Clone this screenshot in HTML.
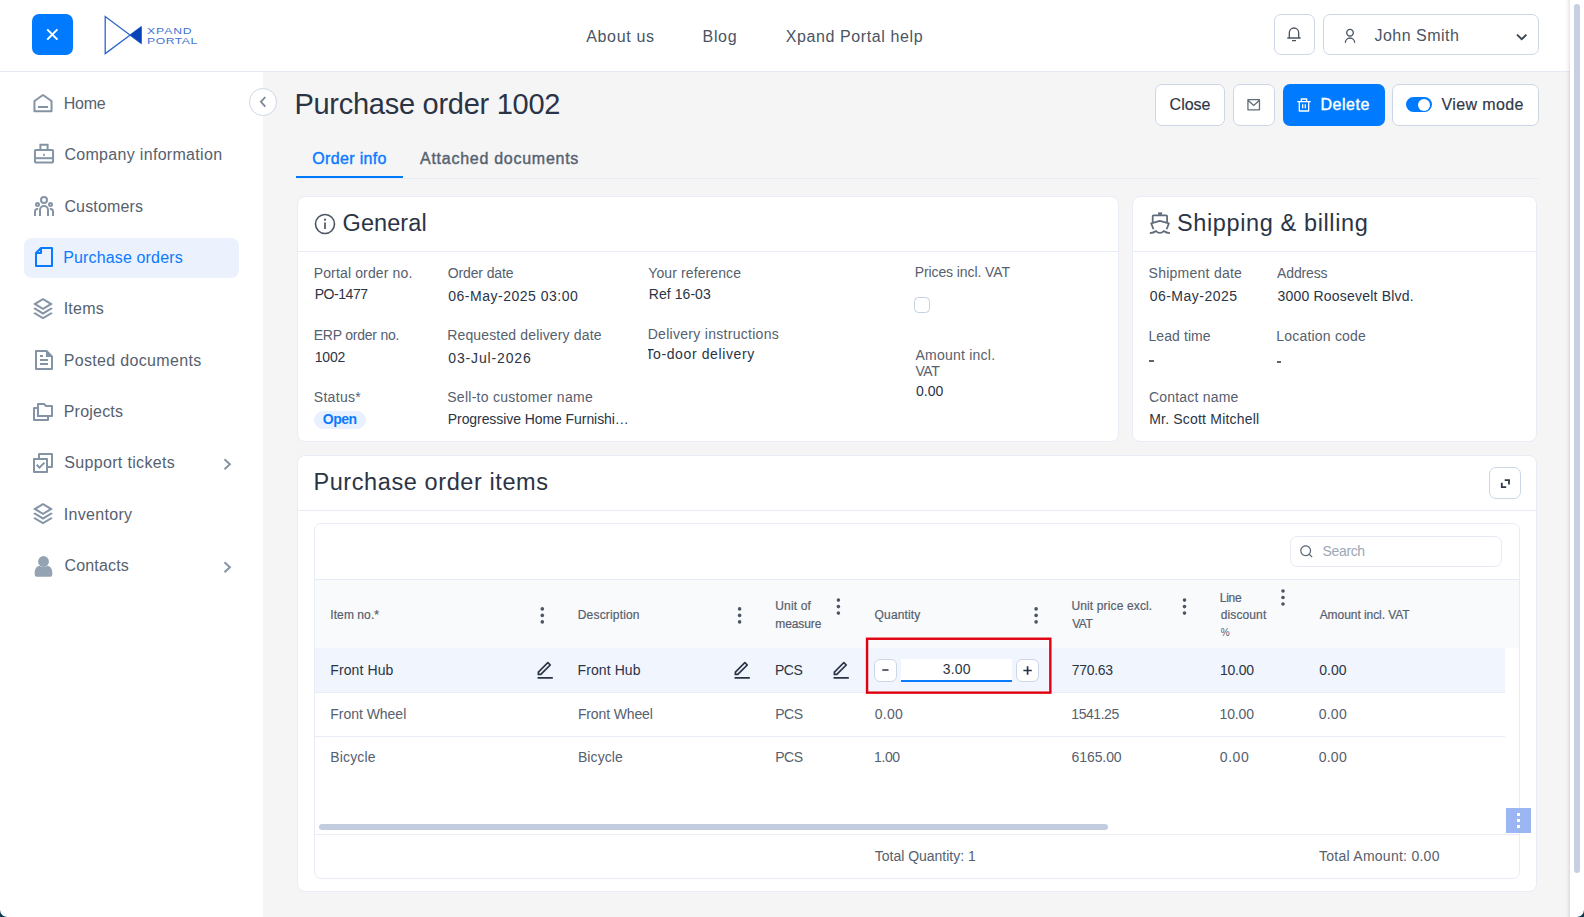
<!DOCTYPE html>
<html lang="en">
<head>
<meta charset="utf-8">
<title>Purchase order 1002</title>
<style>
*{box-sizing:border-box;margin:0;padding:0}
html,body{width:1584px;height:917px;overflow:hidden;background:#f5f5f5;font-family:"Liberation Sans",sans-serif;color:#2b3445}
.a{position:absolute}
.t{position:absolute;white-space:nowrap;line-height:1}
#header{position:absolute;left:0;top:0;width:1570px;height:72px;background:#fff;border-bottom:1px solid #e6ebf3}
#sidebar{position:absolute;left:0;top:72px;width:263px;height:845px;background:#fff}
#scroll{position:absolute;left:1565px;top:0;width:19px;height:917px;background:linear-gradient(to right,rgba(0,0,0,0) 0,rgba(0,0,0,.03) 2.5px,rgba(0,0,0,.1) 5px,#fff 5px,#fff 100%)}
#scroll .thumb{position:absolute;left:9px;top:4px;width:6px;height:869px;background:#c6d0e2;border-radius:3px}
.btn{position:absolute;border:1px solid #cdd6e6;border-radius:7px;background:#fff}
.card{position:absolute;background:#fff;border:1px solid #e8edf5;border-radius:8px}
.hl{position:absolute;height:1px;background:#e8edf5}
svg{position:absolute;overflow:visible}
.ic{fill:#8594a5}
.dk{fill:#4b5563}
</style>
</head>
<body>
<div id="header"></div>
<div id="sidebar"></div>

<!-- header: menu button + logo -->
<div class="a" style="left:31.5px;top:14px;width:41.5px;height:41px;border-radius:7px;background:#007bff"></div>
<svg width="1584" height="72" style="left:0;top:0">
  <path d="M47.2 29.4 L57.4 39.6 M57.4 29.4 L47.2 39.6" stroke="#fff" stroke-width="2" fill="none"/>
  <path d="M105.2 16.6 V53.6 L141 27 V43.3 Z" fill="none" stroke="#2d66cc" stroke-width="1.3"/>
  <path d="M130 35.1 L141.5 26.6 V43.6 Z" fill="#0542b8"/>
</svg>
<span class="t" style="left:147px;top:25.6px;font-size:9.5px;color:#3f74d4;letter-spacing:.71px;transform:scaleX(1.28);transform-origin:0 0">XPAND</span>
<span class="t" style="left:147px;top:36.2px;font-size:9.5px;color:#3f74d4;letter-spacing:.42px;transform:scaleX(1.28);transform-origin:0 0">PORTAL</span>

<!-- header right -->
<div class="btn" style="left:1274px;top:14px;width:41px;height:41px"></div>
<div class="btn" style="left:1323px;top:14px;width:215.5px;height:41px"></div>
<svg class="dk" viewBox="0 0 24 24" width="16" height="16" style="left:1286.4px;top:26.4px"><path d="M20 17h2v2H2v-2h2v-7a8 8 0 1 1 16 0v7zm-2 0v-7a6 6 0 1 0-12 0v7h12zm-9 4h6v2H9v-2z"/></svg>
<svg class="dk" viewBox="0 0 24 24" width="16" height="16" style="left:1341.9px;top:27.6px"><path d="M4 22a8 8 0 1 1 16 0h-2a6 6 0 1 0-12 0H4zm8-9c-3.315 0-6-2.685-6-6s2.685-6 6-6 6 2.685 6 6-2.685 6-6 6zm0-2c2.21 0 4-1.79 4-4s-1.79-4-4-4-4 1.79-4 4 1.79 4 4 4z"/></svg>
<svg width="20" height="20" style="left:1510px;top:28px"><path d="M7 6.6 L11.7 11.2 L16.4 6.6" fill="none" stroke="#3c4655" stroke-width="2"/></svg>

<!-- sidebar -->
<div class="a" style="left:24px;top:238px;width:215.3px;height:39.5px;border-radius:8px;background:#ebf2fe"></div>
<svg class="ic" viewBox="0 0 24 24" width="24" height="24" style="left:31.2px;top:91px"><path d="M3.45 10 L12 4 L20.55 10 V20.200 H3.45 Z" fill="none" stroke="#8594a5" stroke-width="2" stroke-linejoin="round"/><path d="M7 15h10v2H7z"/></svg>
<svg class="ic" viewBox="0 0 24 24" width="24" height="24" style="left:31.5px;top:142px"><path d="M8.400 7.500 V2.850 H15.600 V7.500" fill="none" stroke="#8594a5" stroke-width="2"/><rect x="2.950" y="8.050" width="18.100" height="12.450" rx=".8" fill="none" stroke="#8594a5" stroke-width="2"/><path d="M3 16.200 H21" stroke="#8594a5" stroke-width="2"/><path d="M11.200 11.700h1.600v2.300h-1.600z"/></svg>
<svg class="ic" viewBox="0 0 24 24" width="24" height="24" style="left:31.5px;top:194.3px"><path d="M12 11a5 5 0 0 1 5 5v6h-2v-6a3 3 0 0 0-2.824-2.995L12 13a3 3 0 0 0-2.995 2.824L9 16v6H7v-6a5 5 0 0 1 5-5zm-6.500 3c.279 0 .55.033.81.094a5.947 5.947 0 0 0-.301 1.575L6 16v.086a1.492 1.492 0 0 0-.356-.08L5.500 16a1.500 1.500 0 0 0-1.493 1.356L4 17.500V22H2v-4.500A3.500 3.500 0 0 1 5.500 14zm13 0a3.500 3.500 0 0 1 3.500 3.500V22h-2v-4.500a1.500 1.500 0 0 0-1.356-1.493L18.500 16c-.175 0-.343.030-.5.085V16c0-.666-.108-1.306-.309-1.904.259-.063.530-.096.809-.096zm-13-6a2.500 2.500 0 1 1 0 5 2.500 2.500 0 0 1 0-5zm13 0a2.500 2.500 0 1 1 0 5 2.500 2.500 0 0 1 0-5zm-13 2a.5.5 0 1 0 0 1 .5.5 0 0 0 0-1zm13 0a.5.5 0 1 0 0 1 .5.5 0 0 0 0-1zM12 2a4 4 0 1 1 0 8 4 4 0 0 1 0-8zm0 2a2 2 0 1 0 0 4 2 2 0 0 0 0-4z"/></svg>
<svg viewBox="0 0 24 24" width="24" height="24" style="left:31.6px;top:245.4px"><path d="M9 3 H20 V21 H4 V8 Z M9 3 V8 H4" fill="none" stroke="#0a7aff" stroke-width="2" stroke-linejoin="round"/></svg>
<svg class="ic" viewBox="0 0 24 24" width="24" height="24" style="left:31.1px;top:296.6px"><path d="M20.083 15.200l1.202.721a.5.5 0 0 1 0 .858l-8.770 5.262a1 1 0 0 1-1.030 0l-8.770-5.262a.5.5 0 0 1 0-.858l1.202-.721L12 20.050l8.083-4.850zm0-4.700l1.202.721a.5.5 0 0 1 0 .858L12 17.650l-9.285-5.571a.5.5 0 0 1 0-.858l1.202-.721L12 15.350l8.083-4.850zm-7.569-9.191l8.771 5.262a.5.5 0 0 1 0 .858L12 13 2.715 7.429a.5.5 0 0 1 0-.858l8.770-5.262a1 1 0 0 1 1.030 0zM12 3.332L5.887 7 12 10.668 18.113 7 12 3.332z"/></svg>
<svg class="ic" viewBox="0 0 24 24" width="24" height="24" style="left:31.7px;top:348.4px"><path d="M21 8v12.993A1 1 0 0 1 20.007 22H3.993A.993.993 0 0 1 3 21.008V2.992C3 2.455 3.449 2 4.002 2h10.995L21 8zm-2 1h-5V4H5v16h14V9zM8 7h3v2H8V7zm0 4h8v2H8v-2zm0 4h8v2H8v-2z"/></svg>
<svg class="ic" viewBox="0 0 24 24" width="24" height="24" style="left:31px;top:399.6px"><path d="M6 7V4a1 1 0 0 1 1-1h6.414l2 2H21a1 1 0 0 1 1 1v10a1 1 0 0 1-1 1h-3v3a1 1 0 0 1-1 1H3a1 1 0 0 1-1-1V8a1 1 0 0 1 1-1h3zm0 2H4v10h12v-2H6V9zm2-4v10h12V7h-5.414l-2-2H8z"/></svg>
<svg class="ic" viewBox="0 0 24 24" width="24" height="24" style="left:31px;top:450.9px"><path d="M7 7V3a1 1 0 0 1 1-1h13a1 1 0 0 1 1 1v13a1 1 0 0 1-1 1h-4v3.993c0 .556-.449 1.007-1.007 1.007H3.007A1.006 1.006 0 0 1 2 20.993l.003-12.986C2.003 7.451 2.452 7 3.010 7H7zm2 0h6.993C16.549 7 17 7.449 17 8.007V15h3V4H9v3zm6 2H4.003L4 20h11V9zm-6.497 9l-3.536-3.536 1.414-1.414 2.122 2.122 4.242-4.243 1.414 1.414L8.503 18z"/></svg>
<svg class="ic" viewBox="0 0 24 24" width="24" height="24" style="left:31.1px;top:502.2px"><path d="M20.083 15.200l1.202.721a.5.5 0 0 1 0 .858l-8.770 5.262a1 1 0 0 1-1.030 0l-8.770-5.262a.5.5 0 0 1 0-.858l1.202-.721L12 20.050l8.083-4.850zm0-4.700l1.202.721a.5.5 0 0 1 0 .858L12 17.650l-9.285-5.571a.5.5 0 0 1 0-.858l1.202-.721L12 15.350l8.083-4.850zm-7.569-9.191l8.771 5.262a.5.5 0 0 1 0 .858L12 13 2.715 7.429a.5.5 0 0 1 0-.858l8.770-5.262a1 1 0 0 1 1.030 0zM12 3.332L5.887 7 12 10.668 18.113 7 12 3.332z"/></svg>
<svg width="263" height="40" style="left:0;top:550px"><circle cx="43.5" cy="11.5" r="5.4" fill="#93a3b4"/><path d="M34.7 23 C34.7 18.500 37 16.200 39.500 15.800 C41 17.200 46 17.200 47.500 15.800 C50 16.200 52.300 18.500 52.300 23 V24.700 Q52.300 26.700 50.300 26.700 H36.700 Q34.700 26.700 34.700 24.700 Z" fill="#93a3b4"/></svg>
<svg width="20" height="20" style="left:217px;top:454px"><path d="M7.5 5.2 L12.9 10.2 L7.5 15.2" fill="none" stroke="#8594a5" stroke-width="2"/></svg>
<svg width="20" height="20" style="left:217px;top:556.6px"><path d="M7.5 5.2 L12.9 10.2 L7.5 15.2" fill="none" stroke="#8594a5" stroke-width="2"/></svg>

<!-- collapse button -->
<div class="a" style="left:249px;top:88px;width:27.6px;height:27.6px;border-radius:50%;background:#fff;border:1px solid #cdd6e6"></div>
<svg width="20" height="20" style="left:253px;top:92px"><path d="M12.3 5 L7.9 9.8 L12.3 14.6" fill="none" stroke="#7b8796" stroke-width="1.8"/></svg>

<!-- page actions -->
<div class="btn" style="left:1155px;top:84px;width:70px;height:41.5px"></div>
<div class="btn" style="left:1233px;top:84px;width:41.5px;height:41.5px"></div>
<div class="a" style="left:1282.5px;top:84px;width:102px;height:41.5px;border-radius:7px;background:#007bff"></div>
<div class="btn" style="left:1392px;top:84px;width:146.5px;height:41.5px"></div>
<svg viewBox="0 0 24 24" width="15.400" height="15.400" fill="#626c7a" style="left:1246.300px;top:97.200px"><path d="M3 3h18a1 1 0 0 1 1 1v16a1 1 0 0 1-1 1H3a1 1 0 0 1-1-1V4a1 1 0 0 1 1-1zm17 4.238l-7.928 7.100L4 7.216V19h16V7.238zM4.511 5l7.550 6.662L19.502 5H4.511z"/></svg>
<svg viewBox="0 0 24 24" width="16" height="16" style="left:1296.300px;top:96.500px"><path fill="#fff" d="M17 6h5v2h-2v13a1 1 0 0 1-1 1H5a1 1 0 0 1-1-1V8H2V6h5V3a1 1 0 0 1 1-1h8a1 1 0 0 1 1 1v3zm1 2H6v12h12V8zm-9 3h2v6H9v-6zm4 0h2v6h-2v-6zM9 4v2h6V4H9z"/></svg>
<div class="a" style="left:1406px;top:97.200px;width:26px;height:15.200px;border-radius:8px;background:#007bff"></div>
<div class="a" style="left:1418.300px;top:98.800px;width:12px;height:12px;border-radius:50%;background:#fff"></div>

<!-- tabs -->
<div class="hl" style="left:295px;top:178px;width:1243px"></div>
<div class="a" style="left:295.5px;top:175.800px;width:107.500px;height:2.400px;background:#007bff"></div>

<!-- general card -->
<div class="card" style="left:296.500px;top:196px;width:822.500px;height:246px"></div>
<div class="hl" style="left:297px;top:250.600px;width:821.500px"></div>
<svg width="24" height="24" style="left:313.100px;top:211.600px"><circle cx="12" cy="12" r="9.500" fill="none" stroke="#4b5563" stroke-width="1.600"/><circle cx="12" cy="7.700" r="1.100" fill="#4b5563"/><path d="M12 10.500V17" stroke="#4b5563" stroke-width="1.700"/></svg>
<div class="a" style="left:314px;top:411px;width:52px;height:18px;border-radius:9px;background:#e9f1fe"></div>
<div class="a" style="left:914px;top:297.300px;width:16px;height:16px;border-radius:4.500px;background:#fff;border:1px solid #c5d0e3"></div>
<div class="a" style="left:648.200px;top:345px;width:140px;height:20px;overflow:hidden"><span class="t" style="left:-2.800px;top:2px;font-size:14px;color:#2b3445;letter-spacing:.62px">To-door delivery</span></div>

<!-- shipping card -->
<div class="card" style="left:1132px;top:196px;width:404.500px;height:246px"></div>
<div class="hl" style="left:1132.500px;top:250.600px;width:403.500px"></div>
<svg width="1584" height="260" style="left:0;top:0"><g fill="none" stroke="#616b7a" stroke-width="1.75" stroke-linejoin="round"><rect x="1158.1" y="212.4" width="4" height="2.4" fill="#616b7a" stroke="none"/><path d="M1152.700 222 V216.300 Q1152.700 215.400 1153.600 215.400 H1166.200 Q1167.100 215.400 1167.100 216.300 V222"/><path d="M1153.500 229.300 L1151.200 223.400 L1159.800 220.900 L1168.900 223.400 L1166.600 229.300"/><path d="M1149.800 233 C1152.500 233 1154.500 232.300 1156 231 C1157 232.200 1158.500 232.900 1159.900 232.900 C1161.300 232.900 1162.700 232.200 1163.800 231 C1165.300 232.300 1167.300 233 1170 233"/></g></svg>

<div class="a" style="left:1149.300px;top:360px;width:4.600px;height:1.500px;background:#5a6472"></div>
<div class="a" style="left:1276.900px;top:361.200px;width:4.600px;height:1.500px;background:#5a6472"></div>

<!-- items card -->
<div class="card" style="left:296.500px;top:455px;width:1240px;height:436.500px"></div>
<div class="hl" style="left:297px;top:509.600px;width:1239px"></div>
<div class="btn" style="left:1489px;top:467.300px;width:32px;height:31.600px"></div>
<svg width="20" height="20" style="left:1495px;top:473px"><path d="M9.700 7.200 H14 V11.500 M6.800 9.800 V14.200 H11.200" fill="none" stroke="#2f3848" stroke-width="1.800"/></svg>
<div class="card" style="left:313.500px;top:523px;width:1206.500px;height:356px;border-radius:7px;overflow:hidden">
  <div class="a" style="left:0;top:55px;width:1206px;height:69px;background:#f9fafb;border-top:1px solid #e6ecf4"></div>
  <div class="a" style="left:0;top:124px;width:1190.500px;height:44px;background:#f1f5fd"></div>
  <div class="hl" style="left:0;top:168px;width:1190.500px"></div>
  <div class="hl" style="left:0;top:211.500px;width:1190.500px"></div>
  <div class="hl" style="left:0;top:310px;width:1206px"></div>
  <div class="a" style="left:4.300px;top:300px;width:789.500px;height:6px;border-radius:3px;background:#c3cde0"></div>
</div>
<div class="btn" style="left:1289.800px;top:535.800px;width:212.200px;height:31.200px;border-color:#e6ebf3;border-radius:7px"></div>
<svg viewBox="0 0 24 24" width="14.600" height="14.600" style="left:1298.800px;top:544px"><path fill="#5f6876" d="M18.031 16.617l4.283 4.282-1.415 1.415-4.282-4.283A8.960 8.960 0 0 1 11 20c-4.968 0-9-4.032-9-9s4.032-9 9-9 9 4.032 9 9a8.960 8.960 0 0 1-1.969 5.617zm-2.006-.742A6.977 6.977 0 0 0 18 11c0-3.868-3.133-7-7-7-3.868 0-7 3.132-7 7 0 3.867 3.132 7 7 7a6.977 6.977 0 0 0 4.875-1.975l.150-.150z"/></svg>

<!-- kebabs -->
<svg width="1584" height="917" style="left:0;top:0;pointer-events:none">
 <g fill="#4b5563">
  <g id="k1"><circle cx="542.300" cy="608.900" r="1.800"/><circle cx="542.300" cy="615.400" r="1.800"/><circle cx="542.300" cy="621.900" r="1.800"/></g>
  <g><circle cx="739.600" cy="608.900" r="1.800"/><circle cx="739.600" cy="615.400" r="1.800"/><circle cx="739.600" cy="621.900" r="1.800"/></g>
  <g><circle cx="838.400" cy="600.100" r="1.800"/><circle cx="838.400" cy="606.600" r="1.800"/><circle cx="838.400" cy="613.100" r="1.800"/></g>
  <g><circle cx="1036.100" cy="608.900" r="1.800"/><circle cx="1036.100" cy="615.400" r="1.800"/><circle cx="1036.100" cy="621.900" r="1.800"/></g>
  <g><circle cx="1184.500" cy="600.100" r="1.800"/><circle cx="1184.500" cy="606.600" r="1.800"/><circle cx="1184.500" cy="613.100" r="1.800"/></g>
  <g><circle cx="1283" cy="591" r="1.800"/><circle cx="1283" cy="597.500" r="1.800"/><circle cx="1283" cy="604" r="1.800"/></g>
 </g>
</svg>

<!-- pencils -->
<svg viewBox="0 0 24 24" width="20.400" height="20.400" style="left:534.800px;top:659.600px"><path fill="#2b3445" d="M6.414 16L16.556 5.858l-1.414-1.414L5 14.586V16h1.414zm.829 2H3v-4.243L14.435 2.322a1 1 0 0 1 1.414 0l2.829 2.829a1 1 0 0 1 0 1.414L7.243 18zM3 20h18v2H3v-2z"/></svg>
<svg viewBox="0 0 24 24" width="20.400" height="20.400" style="left:732.300px;top:659.600px"><path fill="#2b3445" d="M6.414 16L16.556 5.858l-1.414-1.414L5 14.586V16h1.414zm.829 2H3v-4.243L14.435 2.322a1 1 0 0 1 1.414 0l2.829 2.829a1 1 0 0 1 0 1.414L7.243 18zM3 20h18v2H3v-2z"/></svg>
<svg viewBox="0 0 24 24" width="20.400" height="20.400" style="left:831.300px;top:659.600px"><path fill="#2b3445" d="M6.414 16L16.556 5.858l-1.414-1.414L5 14.586V16h1.414zm.829 2H3v-4.243L14.435 2.322a1 1 0 0 1 1.414 0l2.829 2.829a1 1 0 0 1 0 1.414L7.243 18zM3 20h18v2H3v-2z"/></svg>

<!-- quantity editor -->
<div class="btn" style="left:874.200px;top:659px;width:22.500px;height:23.300px;border-radius:6px"></div>
<div class="a" style="left:901.300px;top:659px;width:110.600px;height:23.300px;background:#fff;border-bottom:2.200px solid #0a7aff"></div>
<div class="btn" style="left:1016.400px;top:659px;width:22.500px;height:23.300px;border-radius:6px"></div>
<svg width="200" height="70" style="left:860px;top:630px"><rect x="7.050" y="8.750" width="183.300" height="53.900" fill="none" stroke="#e0000f" stroke-width="2.400"/></svg>

<svg width="200" height="40" style="left:860px;top:650px"><path d="M22.300 20 H28.500 M163.400 20.500 H171.800 M167.600 16.300 V24.700" stroke="#2b3445" stroke-width="1.700" fill="none"/></svg>

<!-- floating kebab -->
<div class="a" style="left:1506px;top:808px;width:24.800px;height:24.800px;background:#9cb6f4"></div>
<div class="a" style="left:1516.500px;top:813px;width:3px;height:3px;background:#fff"></div>
<div class="a" style="left:1516.500px;top:819px;width:3px;height:3px;background:#fff"></div>
<div class="a" style="left:1516.500px;top:825px;width:3px;height:3px;background:#fff"></div>

<span class="t" style="left:586.13px;top:29.0px;font-size:16px;color:#4a5563;letter-spacing:0.68px">About us</span>
<span class="t" style="left:702.62px;top:29.0px;font-size:16px;color:#4a5563;letter-spacing:0.64px">Blog</span>
<span class="t" style="left:785.68px;top:29.0px;font-size:16px;color:#4a5563;letter-spacing:0.61px">Xpand Portal help</span>
<span class="t" style="left:1374.44px;top:28.0px;font-size:16px;color:#4a5563;letter-spacing:0.49px">John Smith</span>
<span class="t" style="left:1169.61px;top:97.0px;font-size:16px;color:#2f3848;letter-spacing:-0.03px;-webkit-text-stroke:0.2px #2f3848">Close</span>
<span class="t" style="left:1320.51px;top:97.0px;font-size:16px;color:#ffffff;letter-spacing:0.52px;-webkit-text-stroke:0.4px #ffffff">Delete</span>
<span class="t" style="left:1441.48px;top:97.0px;font-size:16px;color:#2f3848;letter-spacing:0.38px;-webkit-text-stroke:0.2px #2f3848">View mode</span>
<span class="t" style="left:294.41px;top:90.0px;font-size:29px;color:#2b3445;letter-spacing:-0.27px">Purchase order 1002</span>
<span class="t" style="left:312.23px;top:151.0px;font-size:16px;color:#0a7aff;letter-spacing:0.35px;-webkit-text-stroke:0.4px #0a7aff">Order info</span>
<span class="t" style="left:420.04px;top:151.0px;font-size:16px;color:#56616f;letter-spacing:0.73px;-webkit-text-stroke:0.4px #56616f">Attached documents</span>
<span class="t" style="left:63.71px;top:96.0px;font-size:16px;color:#56616f;letter-spacing:-0.21px">Home</span>
<span class="t" style="left:64.42px;top:147.0px;font-size:16px;color:#56616f;letter-spacing:0.31px">Company information</span>
<span class="t" style="left:64.42px;top:199.0px;font-size:16px;color:#56616f;letter-spacing:0.15px">Customers</span>
<span class="t" style="left:63.20px;top:250.0px;font-size:16px;color:#0a7aff;letter-spacing:0.15px">Purchase orders</span>
<span class="t" style="left:63.67px;top:301.0px;font-size:16px;color:#56616f;letter-spacing:0.24px">Items</span>
<span class="t" style="left:63.71px;top:353.0px;font-size:16px;color:#56616f;letter-spacing:0.33px">Posted documents</span>
<span class="t" style="left:63.71px;top:404.0px;font-size:16px;color:#56616f;letter-spacing:0.22px">Projects</span>
<span class="t" style="left:64.18px;top:455.0px;font-size:16px;color:#56616f;letter-spacing:0.34px">Support tickets</span>
<span class="t" style="left:63.67px;top:507.0px;font-size:16px;color:#56616f;letter-spacing:0.33px">Inventory</span>
<span class="t" style="left:64.42px;top:558.0px;font-size:16px;color:#56616f;letter-spacing:0.18px">Contacts</span>
<span class="t" style="left:342.60px;top:212.0px;font-size:23.5px;color:#2b3445;letter-spacing:0.07px">General</span>
<span class="t" style="left:313.72px;top:266.0px;font-size:14px;color:#56606e;letter-spacing:0.14px">Portal order no.</span>
<span class="t" style="left:314.68px;top:287.0px;font-size:14px;color:#2b3445;letter-spacing:-0.45px">PO-1477</span>
<span class="t" style="left:447.68px;top:266.0px;font-size:14px;color:#56606e;letter-spacing:-0.11px">Order date</span>
<span class="t" style="left:448.31px;top:289.0px;font-size:14px;color:#2b3445;letter-spacing:0.50px">06-May-2025 03:00</span>
<span class="t" style="left:648.34px;top:266.0px;font-size:14px;color:#56606e;letter-spacing:0.10px">Your reference</span>
<span class="t" style="left:648.85px;top:287.0px;font-size:14px;color:#2b3445;letter-spacing:0.05px">Ref 16-03</span>
<span class="t" style="left:313.72px;top:328.0px;font-size:14px;color:#56606e;letter-spacing:-0.23px">ERP order no.</span>
<span class="t" style="left:314.85px;top:350.0px;font-size:14px;color:#2b3445;letter-spacing:-0.26px">1002</span>
<span class="t" style="left:447.21px;top:328.0px;font-size:14px;color:#56606e;letter-spacing:0.15px">Requested delivery date</span>
<span class="t" style="left:448.31px;top:351.0px;font-size:14px;color:#2b3445;letter-spacing:0.85px">03-Jul-2026</span>
<span class="t" style="left:647.69px;top:327.0px;font-size:14px;color:#56606e;letter-spacing:0.29px">Delivery instructions</span>
<span class="t" style="left:313.73px;top:390.0px;font-size:14px;color:#56606e;letter-spacing:0.32px">Status*</span>
<span class="t" style="left:322.70px;top:412.0px;font-size:14px;color:#0a7aff;letter-spacing:-0.45px;font-weight:700">Open</span>
<span class="t" style="left:447.24px;top:390.0px;font-size:14px;color:#56606e;letter-spacing:0.27px">Sell-to customer name</span>
<span class="t" style="left:447.78px;top:412.0px;font-size:14px;color:#2b3445;letter-spacing:-0.07px">Progressive Home Furnishi…</span>
<span class="t" style="left:914.72px;top:265.0px;font-size:14px;color:#56606e;letter-spacing:-0.10px">Prices incl. VAT</span>
<span class="t" style="left:915.52px;top:348.0px;font-size:14px;color:#56606e;letter-spacing:0.23px">Amount incl.</span>
<span class="t" style="left:915.47px;top:364.0px;font-size:14px;color:#56606e;letter-spacing:-0.45px">VAT</span>
<span class="t" style="left:916.12px;top:384.0px;font-size:14px;color:#2b3445;letter-spacing:-0.03px">0.00</span>
<span class="t" style="left:1177.06px;top:212.0px;font-size:23.5px;color:#2b3445;letter-spacing:0.61px">Shipping &amp; billing</span>
<span class="t" style="left:1148.60px;top:266.0px;font-size:14px;color:#56606e;letter-spacing:0.25px">Shipment date</span>
<span class="t" style="left:1149.64px;top:289.0px;font-size:14px;color:#2b3445;letter-spacing:0.50px">06-May-2025</span>
<span class="t" style="left:1277.07px;top:266.0px;font-size:14px;color:#56606e;letter-spacing:-0.15px">Address</span>
<span class="t" style="left:1277.53px;top:289.0px;font-size:14px;color:#2b3445;letter-spacing:0.20px">3000 Roosevelt Blvd.</span>
<span class="t" style="left:1148.45px;top:329.0px;font-size:14px;color:#56606e;letter-spacing:0.09px">Lead time</span>
<span class="t" style="left:1276.21px;top:329.0px;font-size:14px;color:#56606e;letter-spacing:0.21px">Location code</span>
<span class="t" style="left:1148.94px;top:390.0px;font-size:14px;color:#56606e;letter-spacing:0.20px">Contact name</span>
<span class="t" style="left:1149.26px;top:412.0px;font-size:14px;color:#2b3445;letter-spacing:0.19px">Mr. Scott Mitchell</span>
<span class="t" style="left:313.45px;top:471.0px;font-size:23.5px;color:#2b3445;letter-spacing:0.59px">Purchase order items</span>
<span class="t" style="left:1322.60px;top:544.0px;font-size:14px;color:#9ca7b6;letter-spacing:-0.37px">Search</span>
<span class="t" style="left:330.30px;top:609.0px;font-size:12px;color:#56606e;letter-spacing:0.08px;-webkit-text-stroke:0.2px #56606e">Item no.*</span>
<span class="t" style="left:577.79px;top:609.0px;font-size:12px;color:#56606e;letter-spacing:0.17px;-webkit-text-stroke:0.2px #56606e">Description</span>
<span class="t" style="left:775.27px;top:600.0px;font-size:12px;color:#56606e;letter-spacing:0.15px;-webkit-text-stroke:0.2px #56606e">Unit of</span>
<span class="t" style="left:775.26px;top:618.0px;font-size:12px;color:#56606e;letter-spacing:-0.10px;-webkit-text-stroke:0.2px #56606e">measure</span>
<span class="t" style="left:874.60px;top:609.0px;font-size:12px;color:#56606e;letter-spacing:0.15px;-webkit-text-stroke:0.2px #56606e">Quantity</span>
<span class="t" style="left:1071.40px;top:600.0px;font-size:12px;color:#56606e;letter-spacing:0.14px;-webkit-text-stroke:0.2px #56606e">Unit price excl.</span>
<span class="t" style="left:1072.16px;top:618.0px;font-size:12px;color:#56606e;letter-spacing:-0.45px;-webkit-text-stroke:0.2px #56606e">VAT</span>
<span class="t" style="left:1219.79px;top:592.0px;font-size:12px;color:#56606e;letter-spacing:-0.30px;-webkit-text-stroke:0.2px #56606e">Line</span>
<span class="t" style="left:1220.69px;top:609.0px;font-size:12px;color:#56606e;letter-spacing:0.12px;-webkit-text-stroke:0.2px #56606e">discount</span>
<span class="t" style="left:1220.67px;top:628.0px;font-size:10px;color:#56606e;letter-spacing:0.00px">%</span>
<span class="t" style="left:1319.68px;top:609.0px;font-size:12px;color:#56606e;letter-spacing:-0.06px;-webkit-text-stroke:0.2px #56606e">Amount incl. VAT</span>
<span class="t" style="left:330.26px;top:663.0px;font-size:14px;color:#2b3445;letter-spacing:0.11px">Front Hub</span>
<span class="t" style="left:577.60px;top:663.0px;font-size:14px;color:#2b3445;letter-spacing:0.08px">Front Hub</span>
<span class="t" style="left:774.96px;top:663.0px;font-size:14px;color:#2b3445;letter-spacing:-0.45px">PCS</span>
<span class="t" style="left:942.84px;top:662.0px;font-size:14px;color:#2b3445;letter-spacing:0.13px">3.00</span>
<span class="t" style="left:1071.72px;top:663.0px;font-size:14px;color:#2b3445;letter-spacing:-0.28px">770.63</span>
<span class="t" style="left:1220.02px;top:663.0px;font-size:14px;color:#2b3445;letter-spacing:-0.26px">10.00</span>
<span class="t" style="left:1319.25px;top:663.0px;font-size:14px;color:#2b3445;letter-spacing:0.04px">0.00</span>
<span class="t" style="left:330.21px;top:707.0px;font-size:14px;color:#56606e;letter-spacing:-0.02px">Front Wheel</span>
<span class="t" style="left:577.95px;top:707.0px;font-size:14px;color:#56606e;letter-spacing:-0.14px">Front Wheel</span>
<span class="t" style="left:775.21px;top:707.0px;font-size:14px;color:#56606e;letter-spacing:-0.45px">PCS</span>
<span class="t" style="left:874.69px;top:707.0px;font-size:14px;color:#56606e;letter-spacing:0.27px">0.00</span>
<span class="t" style="left:1071.33px;top:707.0px;font-size:14px;color:#56606e;letter-spacing:-0.45px">1541.25</span>
<span class="t" style="left:1219.50px;top:707.0px;font-size:14px;color:#56606e;letter-spacing:-0.13px">10.00</span>
<span class="t" style="left:1318.63px;top:707.0px;font-size:14px;color:#56606e;letter-spacing:0.28px">0.00</span>
<span class="t" style="left:330.21px;top:750.0px;font-size:14px;color:#56606e;letter-spacing:0.18px">Bicycle</span>
<span class="t" style="left:577.95px;top:750.0px;font-size:14px;color:#56606e;letter-spacing:0.09px">Bicycle</span>
<span class="t" style="left:775.21px;top:750.0px;font-size:14px;color:#56606e;letter-spacing:-0.45px">PCS</span>
<span class="t" style="left:874.11px;top:750.0px;font-size:14px;color:#56606e;letter-spacing:-0.45px">1.00</span>
<span class="t" style="left:1071.62px;top:750.0px;font-size:14px;color:#56606e;letter-spacing:-0.10px">6165.00</span>
<span class="t" style="left:1219.87px;top:750.0px;font-size:14px;color:#56606e;letter-spacing:0.54px">0.00</span>
<span class="t" style="left:1318.63px;top:750.0px;font-size:14px;color:#56606e;letter-spacing:0.28px">0.00</span>
<span class="t" style="left:874.85px;top:849.0px;font-size:14px;color:#56606e;letter-spacing:-0.02px">Total Quantity: 1</span>
<span class="t" style="left:1319.06px;top:849.0px;font-size:14px;color:#56606e;letter-spacing:0.26px">Total Amount: 0.00</span>

<div id="scroll"><div class="thumb"></div></div>
<!-- window corner artifacts -->
<svg width="1584" height="917" style="left:0;top:0"><path d="M0 910 Q0.500 916 7 917 H0 Z" fill="#0d3a52"/><path d="M1584 910 Q1583.500 916 1577 917 H1584 Z" fill="#0d3a52"/></svg>
</body>
</html>
